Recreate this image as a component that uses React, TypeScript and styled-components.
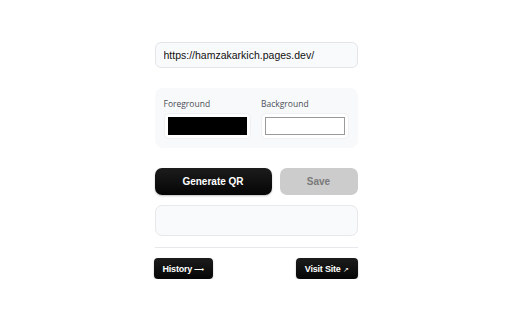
import styled, { createGlobalStyle } from "styled-components";

const GlobalStyle = createGlobalStyle`
  html, body {
    margin: 0;
    padding: 0;
    background: #ffffff;
    font-family: "Liberation Sans", Arial, sans-serif;
  }
`;

const Page = styled.main`
  width: 203px;
  margin: 0 auto;
  padding-top: 42px;
  display: flex;
  flex-direction: column;
`;

const UrlInput = styled.input`
  box-sizing: border-box;
  height: 26px;
  width: 100%;
  padding: 0 8px;
  border: 1px solid #e3e5e8;
  border-radius: 6px;
  background: #f9fafb;
  font-family: "Liberation Sans", Arial, sans-serif;
  font-size: 10.5px;
  color: #111;
  outline: none;
`;

const ColorPanel = styled.section`
  margin-top: 20px;
  height: 60px;
  box-sizing: border-box;
  padding: 9px 9px 0 9px;
  border-radius: 8px;
  background: #f8f9fb;
  display: grid;
  grid-template-columns: 1fr 1fr;
  column-gap: 10px;
`;

const Field = styled.div`
  display: flex;
  flex-direction: column;
`;

const Label = styled.span`
  font-family: "Open Sans", "Noto Sans", sans-serif;
  font-size: 8.5px;
  color: #4b4f56;
  height: 16px;
  line-height: 13px;
`;

const Swatch = styled.div<{ $color: string; $bordered?: boolean }>`
  box-sizing: border-box;
  height: 26px;
  padding: 3px;
  border-radius: 5px;
  background: #ffffff;
  border: 1px solid #eef0f2;
  display: flex;
  div {
    flex: 1;
    background: ${(p) => p.$color};
    border: 1px solid ${(p) => (p.$bordered ? "#9a9a9a" : p.$color)};
  }
`;

const Actions = styled.div`
  margin-top: 20px;
  display: grid;
  grid-template-columns: 117px 1fr;
  column-gap: 8px;
`;

const PrimaryButton = styled.button`
  height: 27px;
  border: none;
  border-radius: 7px;
  background: linear-gradient(180deg, #1c1c1c, #050505);
  box-shadow: 0 1px 2px rgba(0, 0, 0, 0.25);
  color: #fff;
  font-family: "Liberation Sans", Arial, sans-serif;
  font-weight: 700;
  font-size: 10px;
`;

const DisabledButton = styled.button`
  height: 27px;
  border: none;
  border-radius: 7px;
  background: #cccccc;
  color: #7a7a7a;
  font-family: "Liberation Sans", Arial, sans-serif;
  font-weight: 700;
  font-size: 10px;
`;

const Output = styled.div`
  margin-top: 10px;
  height: 31px;
  box-sizing: border-box;
  border: 1px solid #e6e8eb;
  border-radius: 7px;
  background: #f9fafb;
`;

const Divider = styled.hr`
  margin: 11px 0 0 0;
  border: none;
  border-top: 1px solid #e6e8eb;
`;

const Footer = styled.footer`
  margin-top: 10px;
  display: flex;
  justify-content: space-between;
  margin-left: -1px;
`;

const SmallButton = styled.button`
  height: 21px;
  padding: 0 9px;
  border: none;
  border-radius: 4px;
  background: linear-gradient(180deg, #1c1c1c, #060606);
  box-shadow: 0 1px 2px rgba(0, 0, 0, 0.25);
  color: #fff;
  font-family: "Liberation Sans", Arial, sans-serif;
  font-weight: 700;
  font-size: 9px;
  letter-spacing: -0.2px;
`;

const Glyph = styled.span`
  font-weight: 400;
  font-size: 7px;
  margin-left: 2px;
`;

export default function App() {
  return (
    <>
      <GlobalStyle />
      <Page>
        <UrlInput defaultValue="https://hamzakarkich.pages.dev/" />
        <ColorPanel>
          <Field>
            <Label>Foreground</Label>
            <Swatch $color="#000000">
              <div />
            </Swatch>
          </Field>
          <Field>
            <Label>Background</Label>
            <Swatch $color="#ffffff" $bordered>
              <div />
            </Swatch>
          </Field>
        </ColorPanel>
        <Actions>
          <PrimaryButton>Generate QR</PrimaryButton>
          <DisabledButton disabled>Save</DisabledButton>
        </Actions>
        <Output />
        <Divider />
        <Footer>
          <SmallButton>
            History<Glyph>⟶</Glyph>
          </SmallButton>
          <SmallButton>
            Visit Site<Glyph>↗</Glyph>
          </SmallButton>
        </Footer>
      </Page>
    </>
  );
}
